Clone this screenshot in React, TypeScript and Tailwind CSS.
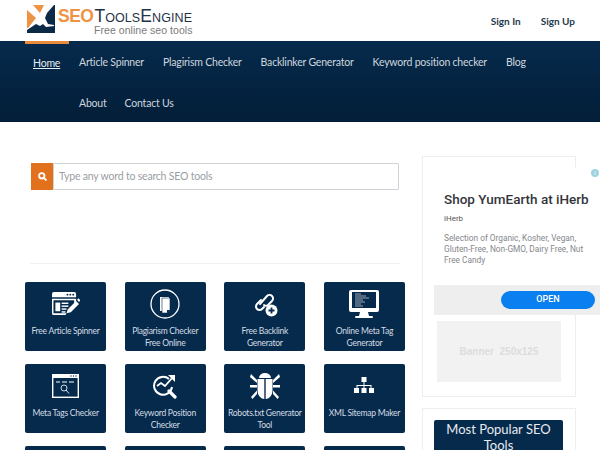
import type { ReactNode } from 'react';

const navTop = ['Article Spinner', 'Plagirism Checker', 'Backlinker Generator', 'Keyword position checker', 'Blog'];

function Logo() {
  return (
    <div className="flex items-start">
      <svg width="28" height="29" viewBox="0 0 28 29" className="mt-[5px]">
        <rect x="0" y="0" width="28" height="28" fill="#fff" />
        <path d="M0 5l9 8-8 10H0z" fill="#ee9344" />
        <path d="M6 0h11l-4 8z" fill="#ee9344" />
        <path d="M27 0v20l-6-1-3-6 2-5z" fill="#0b2a47" />
        <path d="M0 28v-3l9-6 4 2 3-2 3 3 8-1v7z" fill="#0b2a47" />
        <rect x="27" y="0" width="1" height="28" fill="#0b2a47" />
      </svg>
      <div className="ml-[3px] mt-[9px] flex flex-col font-['Liberation_Sans',sans-serif]">
        <div className="flex items-baseline text-[#1f3347] leading-[14px] whitespace-nowrap">
          <span className="text-[17.500px] font-bold tracking-[-0.5px] text-[#ee9344]">SEO</span>
          <span className="ml-[1px] text-[17.500px]">T</span>
          <span className="text-[12.500px] tracking-[0.1px]">OOLS</span>
          <span className="text-[17.500px]">E</span>
          <span className="text-[12.500px] tracking-[0.1px]">NGINE</span>
        </div>
        <div className="ml-[36px] text-[10.500px] tracking-[0.05px] leading-[10px] text-[#7a7a7a] whitespace-nowrap">Free online seo tools</div>
      </div>
    </div>
  );
}

function NavLink({ children, active }: { children: ReactNode; active?: boolean }) {
  return (
    <a className={active ? 'text-[#e6edf3] underline whitespace-nowrap' : 'text-[#cdd6de] whitespace-nowrap'}>{children}</a>
  );
}

function ToolCard({ label, icon }: { label: string; icon: ReactNode }) {
  return (
    <div className="h-[69px] rounded-[2px] bg-[#062a4c] flex flex-col items-center overflow-hidden">
      <div className="h-[42px] flex items-center justify-center shrink-0 mt-[1px]">{icon}</div>
      <div className="text-[8.500px] tracking-[-0.25px] leading-[12px] text-[#d4dce3] text-center px-[1px]">{label}</div>
    </div>
  );
}

const ArticleIcon = (
  <svg width="29" height="26" viewBox="0 0 30 27" fill="#fff">
    <path d="M1 3a2 2 0 0 1 2-2h21a2 2 0 0 1 2 2v3.500H1z" />
    <circle cx="17" cy="3.800" r="1" fill="#062a4c" />
    <circle cx="20" cy="3.800" r="1" fill="#062a4c" />
    <circle cx="23" cy="3.800" r="1" fill="#062a4c" />
    <path d="M1 8h25v3l-2 2V9.500H2.500V23H16l-1 2H3a2 2 0 0 1-2-2z" />
    <rect x="4.500" y="12" width="5" height="9" />
    <rect x="11" y="12" width="7" height="1.500" />
    <rect x="11" y="15" width="7" height="1.500" />
    <rect x="11" y="18" width="5" height="1.500" />
    <rect x="11" y="21" width="4" height="1.500" />
    <path d="M16 23l1.500-4L26 10.500l3 3-8.500 8.500z" />
    <path d="M27 9l1.500-1.500 1.500 1.500v1.500l-1 1z" />
  </svg>
);

const PlagiarismIcon = (
  <svg width="30" height="30" viewBox="0 0 30 30">
    <circle cx="15" cy="15" r="14" fill="none" stroke="#fff" strokeWidth="1.300" />
    <path d="M10 8h9v14h-9z" fill="#fff" />
    <path d="M12 9h8v12l-3 3h-5z" fill="#fff" stroke="#062a4c" strokeWidth="0.600" />
    <path d="M17 24v-3h3z" fill="#062a4c" />
  </svg>
);

const LinkIcon = (
  <svg width="26" height="26" viewBox="0 0 26 26" fill="none" stroke="#fff" strokeWidth="2" strokeLinecap="round">
    <path d="M9 9l-4 4a3.500 3.500 0 0 0 5 5l2-2" />
    <path d="M8 13l7-8a3.500 3.500 0 0 1 5 5l-4 4a3.500 3.500 0 0 1-4 0" />
    <circle cx="19.500" cy="19.500" r="6" fill="#fff" stroke="none" />
    <path d="M19.500 16.500v6M16.500 19.500h6" stroke="#062a4c" strokeWidth="1.800" strokeLinecap="butt" />
  </svg>
);

const MonitorIcon = (
  <svg width="30" height="29" viewBox="0 0 30 29">
    <path d="M2 0h26a2 2 0 0 1 2 2v18a2 2 0 0 1-2 2H2a2 2 0 0 1-2-2V2a2 2 0 0 1 2-2z" fill="#fff" />
    <rect x="3" y="2" width="24" height="16" fill="#062a4c" />
    <path d="M6 4h6M6 6h11M6 8h14M6 10h8M6 12h10M6 14h6M6 16h8" stroke="#fff" strokeWidth="0.600" />
    <path d="M11 22h8l1 4h-10z" fill="#fff" />
    <rect x="6" y="26" width="18" height="2" rx="1" fill="#fff" />
  </svg>
);

const MetaIcon = (
  <svg width="27" height="24" viewBox="0 0 27 24">
    <rect x="0.700" y="0.700" width="25.600" height="22.600" fill="none" stroke="#fff" strokeWidth="1.400" />
    <rect x="0" y="0" width="27" height="4" fill="#fff" />
    <circle cx="19" cy="2" r="0.700" fill="#062a4c" />
    <circle cx="21.500" cy="2" r="0.700" fill="#062a4c" />
    <circle cx="24" cy="2" r="0.700" fill="#062a4c" />
    <path d="M4 8h4M10 8h5M17 8h5" stroke="#fff" strokeWidth="1" />
    <circle cx="12" cy="14" r="3" fill="none" stroke="#fff" strokeWidth="0.800" />
    <path d="M14 16l3 3.500" stroke="#fff" strokeWidth="0.900" />
  </svg>
);

const KeywordIcon = (
  <svg width="24" height="25" viewBox="0 0 24 25" fill="none" stroke="#fff">
    <path d="M16 5a9 9 0 1 0 3 8" strokeWidth="2" />
    <path d="M4 12l4-3 4 3 8-9" strokeWidth="1.800" />
    <path d="M15 1h7v7z" fill="#fff" stroke="none" />
    <path d="M16 17l6 6" strokeWidth="3.200" strokeLinecap="round" />
  </svg>
);

const BugIcon = (
  <svg width="30" height="28" viewBox="0 0 30 28" fill="#fff">
    <path d="M9 6a6 5 0 0 1 12 0z" />
    <path d="M7.500 7h6.800v20c-4-.3-6.800-4-6.800-9z" />
    <path d="M15.700 7h6.800v11c0 5-2.800 8.700-6.800 9z" />
    <path d="M1 2l6 6v3L0 5zM29 2l-6 6v3l7-6zM0 13h7v2.500H0zM30 13h-7v2.500h7zM1 25l6-6.500v3.500l-4.500 5zM29 25l-6-6.500v3.500l4.500 5z" />
  </svg>
);

const SitemapIcon = (
  <svg width="20" height="18" viewBox="0 0 20 18" fill="#fff">
    <rect x="7.500" y="0" width="5" height="5" />
    <path d="M9.500 5h1v3h7v3h-1V9h-6v2h-1V9h-6v2h-1V8h7z" />
    <rect x="0" y="11" width="5" height="5" />
    <rect x="7.500" y="11" width="5" height="5" />
    <rect x="15" y="11" width="5" height="5" />
  </svg>
);

const tools = [
  { label: 'Free Article Spinner', icon: ArticleIcon },
  { label: 'Plagiarism Checker Free Online', icon: PlagiarismIcon },
  { label: 'Free Backlink Generator', icon: LinkIcon },
  { label: 'Online Meta Tag Generator', icon: MonitorIcon },
  { label: 'Meta Tags Checker', icon: MetaIcon },
  { label: 'Keyword Position Checker', icon: KeywordIcon },
  { label: 'Robots.txt Generator Tool', icon: BugIcon },
  { label: 'XML Sitemap Maker', icon: SitemapIcon },
  { label: '', icon: null },
  { label: '', icon: null },
  { label: '', icon: null },
  { label: '', icon: null },
];

export default function App() {
  return (
    <div className="w-[600px] h-[450px] overflow-hidden bg-white font-['Lato','Noto_Sans',sans-serif]">
      <header className="h-[41px] pl-[27px] pr-[25px] flex justify-between">
        <Logo />
        <div className="flex gap-[20px] pt-[14px] text-[10px] leading-[14px] font-bold text-[#253a4d]">
          <span>Sign In</span>
          <span>Sign Up</span>
        </div>
      </header>

      <nav className="relative h-[81px] bg-gradient-to-b from-[#062a4c] to-[#031e38] text-[10.500px] tracking-[-0.2px] leading-[14px]">
        <div className="absolute left-[25px] top-0 h-[3px] w-[44px] bg-[#e98a3c]" />
        <div className="flex pl-[33px] pt-[14px]">
          <div className="w-[46px] pt-[1px]"><NavLink active>Home</NavLink></div>
          <div className="flex gap-[19px]">
            {navTop.map((item) => <NavLink key={item}>{item}</NavLink>)}
          </div>
        </div>
        <div className="flex gap-[18px] pl-[79px] pt-[26px]">
          <NavLink>About</NavLink>
          <NavLink>Contact Us</NavLink>
        </div>
      </nav>

      <main className="flex pt-[35px] pl-[25px]">
        <section className="w-[380px] shrink-0">
          <div className="mt-[6px] ml-[6px] mr-[6px] flex h-[27px]">
            <div className="w-[22px] bg-[#e2711d] flex items-center justify-center">
              <svg width="9" height="9" viewBox="0 0 10 10" fill="none" stroke="#fff" strokeWidth="2">
                <circle cx="4.200" cy="4.200" r="3" />
                <path d="M6.500 6.500L9.500 9.500" />
              </svg>
            </div>
            <div className="flex-1 border border-[#cfd3d8] rounded-[1px] pl-[5px] flex items-center text-[10.500px] tracking-[-0.2px] text-[#9a9ea3]">
              Type any word to search SEO tools
            </div>
          </div>
          <div className="mt-[73px] mx-[5px] border-t border-[#f1f1f1]" />
          <div className="mt-[18px] grid grid-cols-4 gap-x-[18.500px] gap-y-[13px]">
            {tools.map((tool, i) => <ToolCard key={i} label={tool.label} icon={tool.icon} />)}
          </div>
        </section>

        <aside className="ml-[17px] w-[154px] shrink-0 -mt-[1px]">
          <div className="h-[241px] border border-[#eeeeee] pl-[11px] pt-[11px]">
            <div className="relative w-[166px] h-[147px] bg-white font-['Roboto',sans-serif]">
              <div className="pl-[10px] pt-[22px]">
                <div className="text-[13.500px] leading-[18px] font-medium text-[#33363a] whitespace-nowrap">Shop YumEarth at iHerb</div>
                <div className="mt-[6px] text-[8px] leading-[10px] text-[#555]">iHerb</div>
                <div className="mt-[9px] w-[150px] text-[8.300px] leading-[11px] text-[#85888c]">Selection of Organic, Kosher, Vegan, Gluten-Free, Non-GMO, Dairy Free, Nut Free Candy</div>
              </div>
              <div className="absolute left-0 right-0 bottom-0 h-[30px] bg-[#eeeeee] flex justify-end items-center pr-[5px]">
                <div className="w-[94px] h-[18px] rounded-full bg-[#0a80f0] text-white text-[9px] font-medium flex items-center justify-center">OPEN</div>
              </div>
              <div className="absolute right-[1px] top-[1px] w-[8px] h-[8px] rounded-full bg-[#9fd3df] text-white text-[6px] leading-[8px] text-center">i</div>
            </div>
            <div className="mt-[6px] ml-[3px] w-[124px] h-[61px] bg-[#f2f2f2] flex items-center justify-center font-['Liberation_Sans',sans-serif] text-[10px] font-bold text-[#dddddd] whitespace-pre">
              Banner  250x125
            </div>
          </div>
          <div className="mt-[11px] border border-[#eeeeee] pl-[11px] pt-[11px] h-[60px]">
            <div className="w-[129px] rounded-t-[2px] bg-[#062a4c] text-[#e6ebef] text-center text-[13px] leading-[16px] pt-[1px] pb-[6px] px-2">
              Most Popular SEO Tools
            </div>
          </div>
        </aside>
      </main>
    </div>
  );
}
